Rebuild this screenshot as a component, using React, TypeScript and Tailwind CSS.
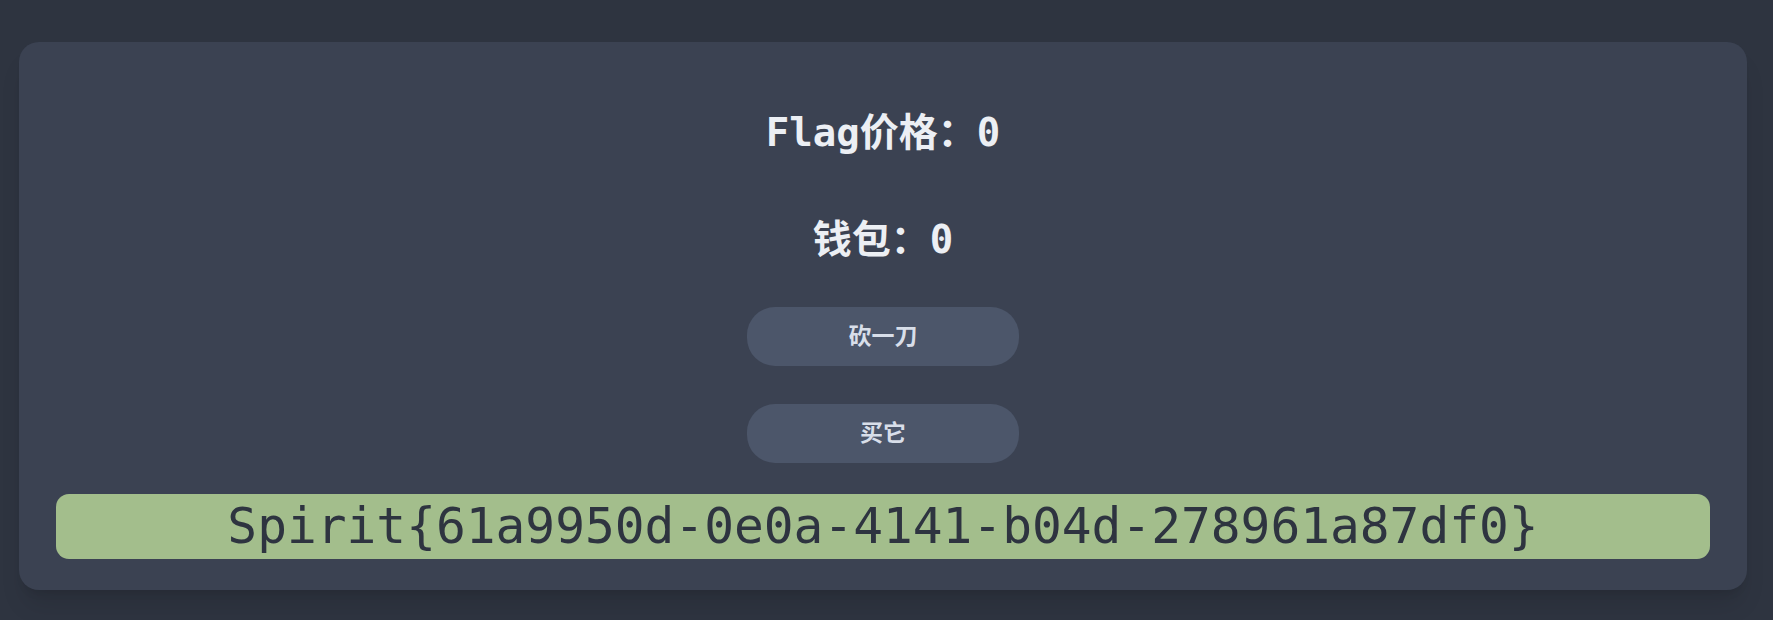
import React from "react";

const mono = { fontFamily: '"DejaVu Sans Mono", "Noto Sans CJK SC", monospace' };

export default function App() {
  const price = 0;
  const wallet = 0;
  const flag = "Spirit{61a9950d-0e0a-4141-b04d-278961a87df0}";

  return (
    <div className="h-screen overflow-hidden bg-[#2e3440] pl-[19px] pr-[26px] pt-[42px]" style={mono}>
      <div className="w-full h-[548px] rounded-[20px] bg-[#3b4252] shadow-xl px-[37px] pt-[67px] flex flex-col items-center">
        {/* Price + wallet */}
        <h2 className="text-[39px] leading-[48px] font-bold text-[#eceff4]">Flag价格：{price}</h2>
        <h2 className="mt-[59px] text-[39px] leading-[48px] font-bold text-[#eceff4]">钱包：{wallet}</h2>

        {/* Actions */}
        <button className="mt-[43px] w-[272px] h-[59px] rounded-[28px] bg-[#4c566a] text-[#d8dee9] text-[23px] font-bold">
          砍一刀
        </button>
        <button className="mt-[38px] w-[272px] h-[59px] rounded-[28px] bg-[#4c566a] text-[#d8dee9] text-[23px] font-bold">
          买它
        </button>

        {/* Flag */}
        <div className="mt-[31px] w-full h-[65px] rounded-[13px] bg-[#a3be8c] text-[#2e3440] text-[49.5px] leading-[65px] text-center">
          {flag}
        </div>
      </div>
    </div>
  );
}
